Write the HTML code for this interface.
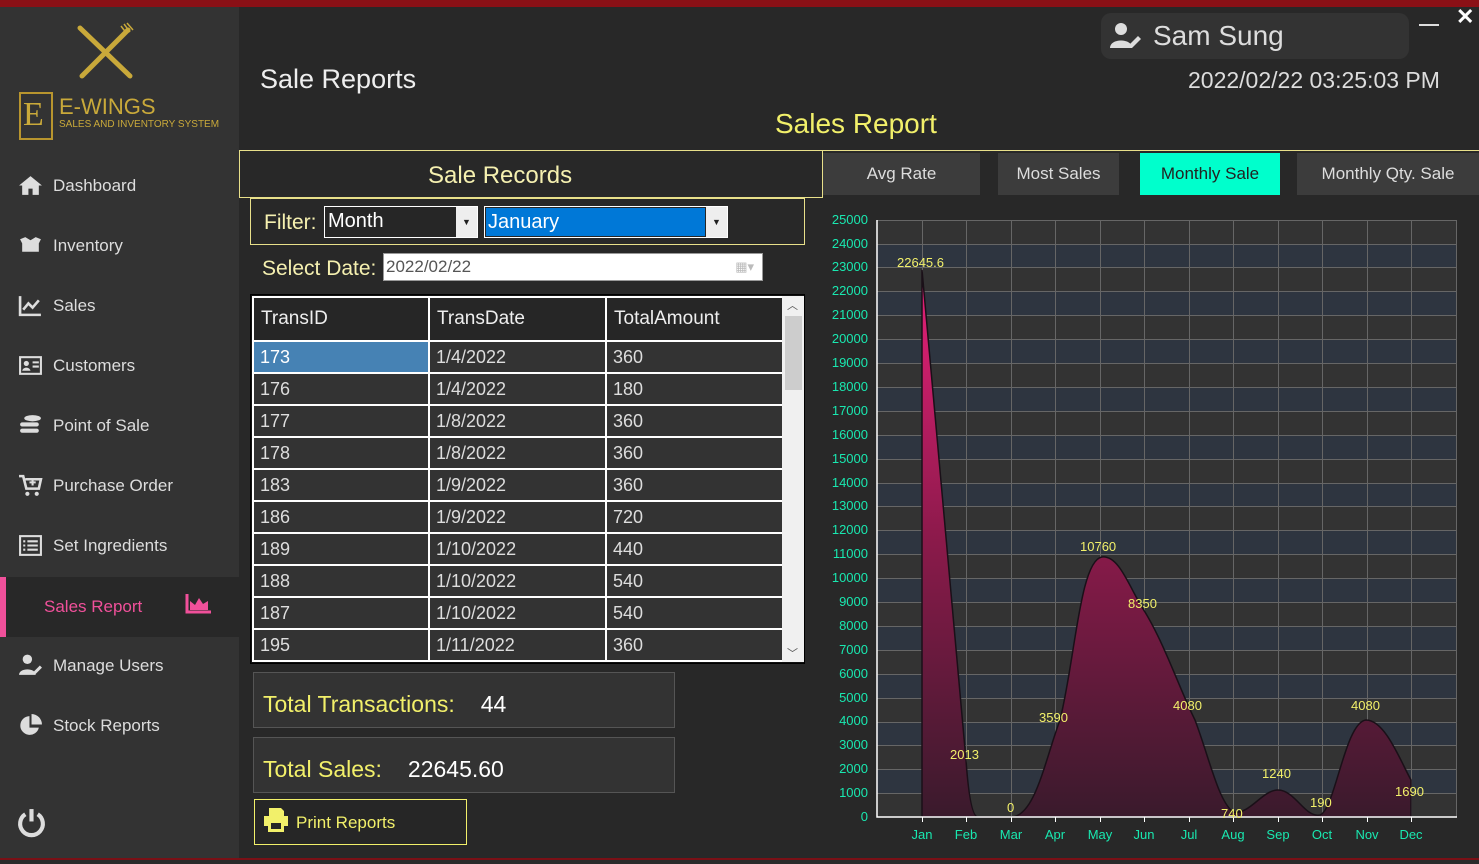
<!DOCTYPE html><html><head><meta charset="utf-8"><style>
*{margin:0;padding:0;box-sizing:border-box}
body{width:1479px;height:864px;background:#282828;position:relative;overflow:hidden;font-family:"Liberation Sans",sans-serif;color:#eee}
.a{position:absolute}
.nav{position:absolute;left:18px;font-size:17px;color:#ddd;display:flex;align-items:center;gap:10px}
.nav svg{width:25px;height:25px}
.tab{position:absolute;top:153px;height:42px;background:#3c3c3c;color:#ddd;font-size:17px;display:flex;align-items:center;justify-content:center}
table{border-collapse:collapse;position:absolute;left:0;top:0;width:530px;table-layout:fixed}
td{border:2px solid #fff;height:32px;font-size:18px;padding-left:6px;color:#ddd;background:#333}
th{border:2px solid #fff;height:44px;font-size:19px;font-weight:normal;text-align:left;padding-left:7px;color:#eee;background:#262626}
.yl{position:absolute;left:810px;width:58px;text-align:right;font-size:13px;color:#19e8b0}
.xl{position:absolute;top:827px;font-size:13px;color:#19e8b0;width:40px;text-align:center}
.dl{position:absolute;font-size:13px;color:#f2f06a}
</style></head><body>
<div class="a" style="left:0;top:0;width:1479px;height:7px;background:#8a1016"></div>
<div class="a" style="left:0;top:7px;width:239px;height:857px;background:#333"></div>
<div class="a" style="left:0;top:858px;width:1479px;height:6px;background:#2a2a2a;border-top:2px solid #7a1016"></div>
<svg class="a" style="left:74px;top:22px" width="62" height="60" viewBox="0 0 62 60"><g stroke="#c9a93a" stroke-width="5" stroke-linecap="round"><line x1="6" y1="6" x2="56" y2="54"/><line x1="54" y1="8" x2="8" y2="54"/></g><g stroke="#c9a93a" stroke-width="1.5"><line x1="50" y1="2" x2="56" y2="10"/><line x1="53" y1="1" x2="59" y2="8"/><line x1="47" y1="4" x2="53" y2="12"/></g></svg>
<div class="a" style="left:19px;top:92px;width:34px;height:48px;border:2px solid #b8952e"></div>
<div class="a" style="left:23px;top:96px;font-family:'Liberation Serif',serif;font-size:34px;color:#c9a93a">E</div>
<div class="a" style="left:59px;top:94px;font-size:22px;color:#c9a93a">E-WINGS</div>
<div class="a" style="left:59px;top:119px;font-size:10px;color:#c9a93a">SALES AND INVENTORY SYSTEM</div>
<div class="nav" style="top:173px"><svg viewBox="0 0 24 24"><path d="M12 3 1 12h3v9h6v-6h4v6h6v-9h3z" fill="#ddd"/></svg>Dashboard</div>
<div class="nav" style="top:233px"><svg viewBox="0 0 24 24"><path d="M2 6l5-2 5 3 5-3 5 2-2 4v8H4v-8z" fill="#ddd"/></svg>Inventory</div>
<div class="nav" style="top:293px"><svg viewBox="0 0 24 24"><path d="M2 3v18h20" stroke="#ddd" stroke-width="2.5" fill="none"/><path d="M5 16l5-6 4 4 6-7" stroke="#ddd" stroke-width="2.5" fill="none"/></svg>Sales</div>
<div class="nav" style="top:353px"><svg viewBox="0 0 24 24"><rect x="2" y="4" width="20" height="16" stroke="#ddd" stroke-width="2" fill="none"/><circle cx="8" cy="10" r="2.5" fill="#ddd"/><path d="M4 17c1-4 7-4 8 0z" fill="#ddd"/><path d="M14 9h6M14 13h6" stroke="#ddd" stroke-width="2"/></svg>Customers</div>
<div class="nav" style="top:413px"><svg viewBox="0 0 24 24"><ellipse cx="14" cy="5" rx="8" ry="3" fill="#ddd"/><rect x="2" y="9" width="18" height="4" rx="2" fill="#ddd"/><rect x="2" y="15" width="18" height="4" rx="2" fill="#ddd"/></svg>Point of Sale</div>
<div class="nav" style="top:473px"><svg viewBox="0 0 24 24"><path d="M1 3h4l3 12h12l2-9H7" stroke="#ddd" stroke-width="2.5" fill="none"/><circle cx="9" cy="20" r="2" fill="#ddd"/><circle cx="18" cy="20" r="2" fill="#ddd"/><path d="M14 6v6M11 9h6" stroke="#ddd" stroke-width="2"/></svg>Purchase Order</div>
<div class="nav" style="top:533px"><svg viewBox="0 0 24 24"><rect x="2" y="3" width="20" height="18" stroke="#ddd" stroke-width="2" fill="none"/><path d="M5 8h2M9 8h10M5 12h2M9 12h10M5 16h2M9 16h10" stroke="#ddd" stroke-width="2"/></svg>Set Ingredients</div>
<div class="a" style="left:0;top:577px;width:239px;height:60px;background:#282828;border-left:6px solid #f0509a"></div>
<div class="a" style="left:44px;top:597px;font-size:17px;color:#f0509a">Sales Report</div>
<svg class="a" style="left:185px;top:594px" width="26" height="20" viewBox="0 0 26 20"><path d="M2 0v18h24" stroke="#f0509a" stroke-width="3" fill="none"/><path d="M5 16V7l5 4 4-7 4 6 5-3v9z" fill="#f0509a"/></svg>
<div class="nav" style="top:653px"><svg viewBox="0 0 24 24"><circle cx="9" cy="6" r="4.5" fill="#ddd"/><path d="M1 21c0-7 16-7 16 0z" fill="#ddd"/><path d="M15 18l6-6 2 2-6 6h-2z" fill="#ddd"/></svg>Manage Users</div>
<div class="nav" style="top:713px"><svg viewBox="0 0 24 24"><path d="M11 3a9 9 0 1 0 9 11h-9z" fill="#ddd"/><path d="M13 1v10h10A10 10 0 0 0 13 1z" fill="#ddd"/></svg>Stock Reports</div>
<svg class="a" style="left:16px;top:807px" width="31" height="31" viewBox="0 0 30 30"><path d="M9 7a11 11 0 1 0 12 0" stroke="#ddd" stroke-width="4" fill="none"/><path d="M15 2v12" stroke="#ddd" stroke-width="4"/></svg>
<div class="a" style="left:260px;top:64px;font-size:27px;color:#eee">Sale Reports</div>
<div class="a" style="left:1101px;top:13px;width:308px;height:46px;border-radius:10px;background:#333"></div>
<svg class="a" style="left:1110px;top:22px" width="32" height="28" viewBox="0 0 32 28"><circle cx="11" cy="7" r="6" fill="#ddd"/><path d="M0 26c0-10 22-10 22 0z" fill="#ddd"/><path d="M19 23l9-9 3 3-9 9h-3z" fill="#ddd"/></svg>
<div class="a" style="left:1153px;top:20px;font-size:28px;color:#ddd">Sam Sung</div>
<div class="a" style="left:1419px;top:24px;width:20px;height:2px;background:#ddd"></div>
<div class="a" style="left:1456px;top:4px;font-size:22px;font-weight:bold;color:#fff">✕</div>
<div class="a" style="left:1188px;top:67px;font-size:23px;color:#ddd">2022/02/22 03:25:03 PM</div>
<div class="a" style="left:775px;top:108px;font-size:28px;color:#f2f06a">Sales Report</div>
<div class="a" style="left:239px;top:150px;width:1240px;height:1px;background:#e8e08a"></div>
<div class="a" style="left:239px;top:150px;width:584px;height:48px;border:1px solid #e8e08a"></div>
<div class="a" style="left:428px;top:162px;font-size:24px;color:#f5f0b0">Sale Records</div>
<div class="tab" style="left:823px;width:157px">Avg Rate</div>
<div class="tab" style="left:998px;width:121px">Most Sales</div>
<div class="tab" style="left:1140px;width:140px;background:#00ffcc;color:#222">Monthly Sale</div>
<div class="tab" style="left:1297px;width:182px">Monthly Qty. Sale</div>
<div class="a" style="left:250px;top:198px;width:555px;height:47px;border:1px solid #e8e08a"></div>
<div class="a" style="left:264px;top:211px;font-size:21px;color:#f5f0b0">Filter:</div>
<div class="a" style="left:324px;top:206px;width:154px;height:32px;border:1px solid #fff;background:#262626"></div>
<div class="a" style="left:328px;top:210px;font-size:20px;color:#fff">Month</div>
<div class="a" style="left:456px;top:207px;width:21px;height:30px;background:#eee;color:#222;font-size:9px;text-align:center;line-height:30px">▼</div>
<div class="a" style="left:484px;top:206px;width:244px;height:32px;border:1px solid #fff;background:#262626"></div>
<div class="a" style="left:486px;top:208px;width:219px;height:28px;background:#0078d7;font-size:20px;color:#fff;padding-left:2px;line-height:28px">January</div>
<div class="a" style="left:706px;top:207px;width:21px;height:30px;background:#eee;color:#222;font-size:9px;text-align:center;line-height:30px">▼</div>
<div class="a" style="left:262px;top:257px;font-size:21px;color:#f5f0b0">Select Date:</div>
<div class="a" style="left:383px;top:253px;width:380px;height:28px;background:#fff;border:1px solid #999;font-size:17px;color:#555;padding-left:2px;line-height:26px">2022/02/22<span style="float:right;color:#bbb;font-size:13px;margin-right:8px">▦▾</span></div>
<div class="a" style="left:250px;top:294px;width:555px;height:370px;background:#111;border:1px solid #000"></div>
<div class="a" style="left:782px;top:296px;width:22px;height:366px;background:#f0f0f0"></div>
<div class="a" style="left:785px;top:316px;width:17px;height:74px;background:#cdcdcd"></div>
<div class="a" style="left:787px;top:297px;font-size:11px;color:#555">︿</div>
<div class="a" style="left:787px;top:645px;font-size:11px;color:#555">﹀</div>
<div class="a" style="left:252px;top:296px;width:530px;height:366px;overflow:hidden">
<table>
<colgroup><col style="width:176px"><col style="width:177px"><col style="width:177px"></colgroup>
<tr><th>TransID</th><th>TransDate</th><th>TotalAmount</th></tr>
<tr><td style="background:#4682b4;color:#fff">173</td><td>1/4/2022</td><td>360</td></tr>
<tr><td>176</td><td>1/4/2022</td><td>180</td></tr>
<tr><td>177</td><td>1/8/2022</td><td>360</td></tr>
<tr><td>178</td><td>1/8/2022</td><td>360</td></tr>
<tr><td>183</td><td>1/9/2022</td><td>360</td></tr>
<tr><td>186</td><td>1/9/2022</td><td>720</td></tr>
<tr><td>189</td><td>1/10/2022</td><td>440</td></tr>
<tr><td>188</td><td>1/10/2022</td><td>540</td></tr>
<tr><td>187</td><td>1/10/2022</td><td>540</td></tr>
<tr><td>195</td><td>1/11/2022</td><td>360</td></tr>
<tr><td>196</td><td>1/11/2022</td><td>360</td></tr>
</table></div>
<div class="a" style="left:253px;top:672px;width:422px;height:56px;background:#333;border:1px solid #555"></div>
<div class="a" style="left:263px;top:691px;font-size:23px;color:#f2f06a">Total Transactions:<span style="color:#fff;margin-left:26px">44</span></div>
<div class="a" style="left:253px;top:737px;width:422px;height:56px;background:#333;border:1px solid #555"></div>
<div class="a" style="left:263px;top:756px;font-size:23px;color:#f2f06a">Total Sales:<span style="color:#fff;margin-left:26px">22645.60</span></div>
<div class="a" style="left:254px;top:799px;width:213px;height:46px;border:1px solid #f2f06a;background:#262626"></div>
<svg class="a" style="left:263px;top:807px" width="26" height="26" viewBox="0 0 26 26"><path d="M6 1h12l3 3v5H6z M1 9h24v10h-4v6H5v-6H1z" fill="#f2f06a"/><rect x="8" y="16" width="10" height="6" fill="#262626"/></svg>
<div class="a" style="left:296px;top:813px;font-size:17px;color:#f2f06a">Print Reports</div>
<svg class="a" style="left:0;top:0" width="1479" height="864">
<defs><linearGradient id="g" x1="0" y1="0" x2="0" y2="1"><stop offset="0" stop-color="#e8207a"/><stop offset="0.5" stop-color="#8a1a4a"/><stop offset="1" stop-color="#3a1a2c"/></linearGradient></defs>
<rect x="877" y="220" width="580" height="597" fill="#333"/>
<g fill="#2e3540">
<rect x="877" y="244" width="580" height="24"/><rect x="877" y="291" width="580" height="24"/><rect x="877" y="339" width="580" height="24"/><rect x="877" y="387" width="580" height="24"/><rect x="877" y="435" width="580" height="24"/><rect x="877" y="483" width="580" height="24"/><rect x="877" y="530" width="580" height="24"/><rect x="877" y="578" width="580" height="24"/><rect x="877" y="626" width="580" height="24"/><rect x="877" y="674" width="580" height="24"/><rect x="877" y="722" width="580" height="24"/><rect x="877" y="769" width="580" height="24"/>
</g>
<g stroke="#666" stroke-width="1">
<path d="M877 220.5H1457M877 244.5H1457M877 267.5H1457M877 291.5H1457M877 315.5H1457M877 339.5H1457M877 363.5H1457M877 387.5H1457M877 411.5H1457M877 435.5H1457M877 459.5H1457M877 483.5H1457M877 506.5H1457M877 530.5H1457M877 554.5H1457M877 578.5H1457M877 602.5H1457M877 626.5H1457M877 650.5H1457M877 674.5H1457M877 698.5H1457M877 722.5H1457M877 745.5H1457M877 769.5H1457M877 793.5H1457"/>
<path d="M922.5 220V817M966.5 220V817M1011.5 220V817M1055.5 220V817M1100.5 220V817M1144.5 220V817M1189.5 220V817M1233.5 220V817M1278.5 220V817M1322.5 220V817M1367.5 220V817M1411.5 220V817M1456.5 220V817"/>
</g>
<path d="M922 270 L966 760 Q970 817 978 817 L1011 817 C1035 817 1045 760 1060 720 C1075 660 1080 560 1102 557 C1120 555 1130 590 1145 612 C1165 645 1180 690 1195 720 C1210 760 1218 800 1233 812 C1250 815 1262 790 1278 790 C1295 790 1305 818 1320 815 C1335 810 1345 722 1366 720 C1385 720 1400 760 1411 780 L1411 817 L922 817Z" fill="url(#g)" stroke="#1a1018" stroke-width="1.5"/>
<path d="M877 220V817H1457" stroke="#fff" stroke-width="1.5" fill="none"/>
<g stroke="#fff"><path d="M922.5 817v5M966.5 817v5M1011.5 817v5M1055.5 817v5M1100.5 817v5M1144.5 817v5M1189.5 817v5M1233.5 817v5M1278.5 817v5M1322.5 817v5M1367.5 817v5M1411.5 817v5"/></g>
</svg>
<div class="yl" style="top:212px">25000</div><div class="yl" style="top:236px">24000</div><div class="yl" style="top:259px">23000</div><div class="yl" style="top:283px">22000</div><div class="yl" style="top:307px">21000</div><div class="yl" style="top:331px">20000</div><div class="yl" style="top:355px">19000</div><div class="yl" style="top:379px">18000</div><div class="yl" style="top:403px">17000</div><div class="yl" style="top:427px">16000</div><div class="yl" style="top:451px">15000</div><div class="yl" style="top:475px">14000</div><div class="yl" style="top:498px">13000</div><div class="yl" style="top:522px">12000</div><div class="yl" style="top:546px">11000</div><div class="yl" style="top:570px">10000</div><div class="yl" style="top:594px">9000</div><div class="yl" style="top:618px">8000</div><div class="yl" style="top:642px">7000</div><div class="yl" style="top:666px">6000</div><div class="yl" style="top:690px">5000</div><div class="yl" style="top:713px">4000</div><div class="yl" style="top:737px">3000</div><div class="yl" style="top:761px">2000</div><div class="yl" style="top:785px">1000</div><div class="yl" style="top:809px">0</div>
<div class="xl" style="left:902px">Jan</div><div class="xl" style="left:946px">Feb</div><div class="xl" style="left:991px">Mar</div><div class="xl" style="left:1035px">Apr</div><div class="xl" style="left:1080px">May</div><div class="xl" style="left:1124px">Jun</div><div class="xl" style="left:1169px">Jul</div><div class="xl" style="left:1213px">Aug</div><div class="xl" style="left:1258px">Sep</div><div class="xl" style="left:1302px">Oct</div><div class="xl" style="left:1347px">Nov</div><div class="xl" style="left:1391px">Dec</div>
<div class="dl" style="left:897px;top:255px">22645.6</div>
<div class="dl" style="left:950px;top:747px">2013</div>
<div class="dl" style="left:1007px;top:800px">0</div>
<div class="dl" style="left:1039px;top:710px">3590</div>
<div class="dl" style="left:1080px;top:539px">10760</div>
<div class="dl" style="left:1128px;top:596px">8350</div>
<div class="dl" style="left:1173px;top:698px">4080</div>
<div class="dl" style="left:1221px;top:806px">740</div>
<div class="dl" style="left:1262px;top:766px">1240</div>
<div class="dl" style="left:1310px;top:795px">190</div>
<div class="dl" style="left:1351px;top:698px">4080</div>
<div class="dl" style="left:1395px;top:784px">1690</div>
</body></html>
